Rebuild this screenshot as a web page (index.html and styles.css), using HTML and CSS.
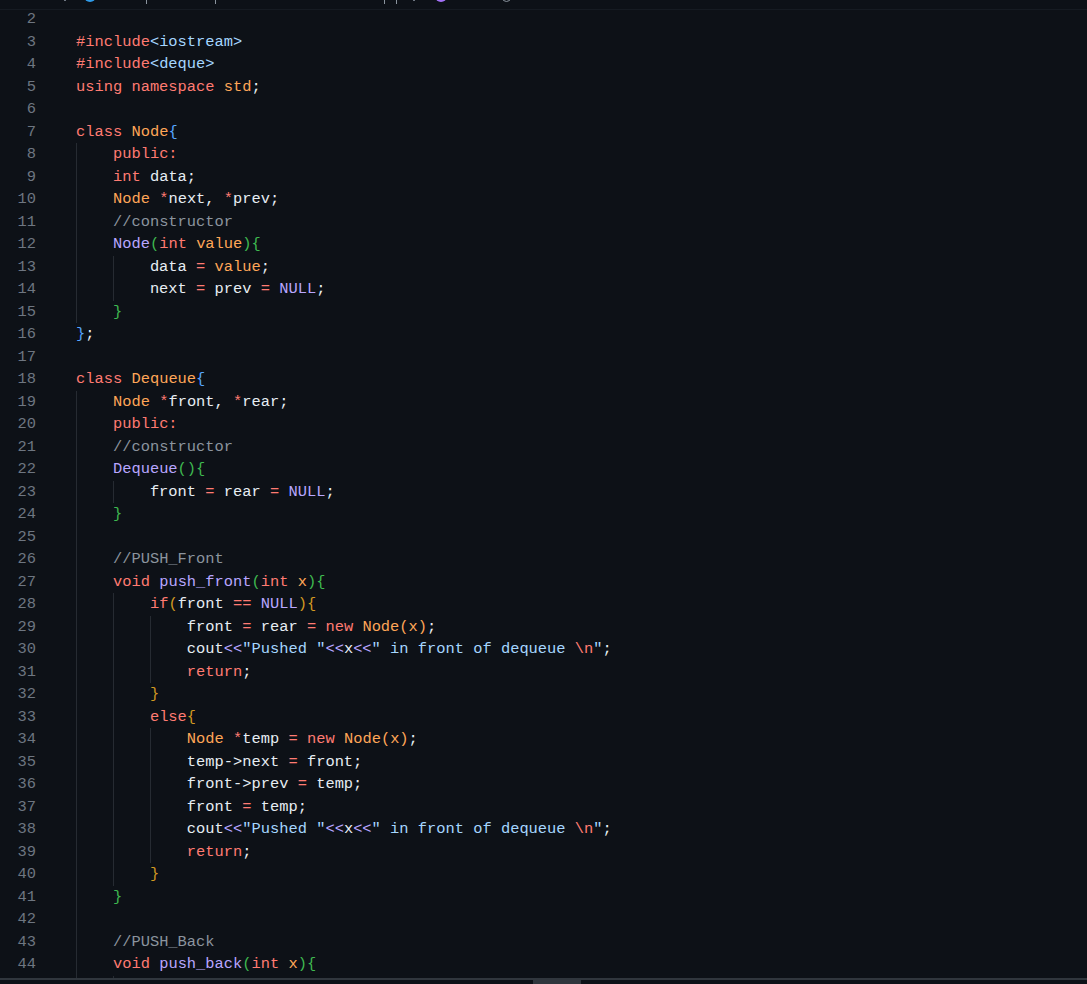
FILE: index.html
```html
<!DOCTYPE html>
<html lang="en">
<head>
    <meta charset="UTF-8">
    <title>deque.cpp</title>
    <link rel="stylesheet" href="styles.css">
</head>
<body>
    <div class="crumbs">
        <span class="crumb-dot dot-a"></span>
        <span class="crumb-mark mark-blue"></span>
        <span class="crumb-tick tick-a"></span>
        <span class="crumb-tick tick-b"></span>
        <span class="crumb-tick tick-c"></span>
        <span class="crumb-tick tick-d"></span>
        <span class="crumb-dot dot-b"></span>
        <span class="crumb-mark mark-purple"></span>
        <span class="crumb-ring"></span>
    </div>
    <div class="editor">
<div class="line"><span class="num">2</span><span class="code"></span></div>
<div class="line"><span class="num">3</span><span class="code"><span class="kw">#include</span><span class="str">&lt;iostream&gt;</span></span></div>
<div class="line"><span class="num">4</span><span class="code"><span class="kw">#include</span><span class="str">&lt;deque&gt;</span></span></div>
<div class="line"><span class="num">5</span><span class="code"><span class="kw">using namespace</span> <span class="ty">std</span>;</span></div>
<div class="line"><span class="num">6</span><span class="code"></span></div>
<div class="line"><span class="num">7</span><span class="code"><span class="kw">class</span> <span class="ty">Node</span><span class="b1">{</span></span></div>
<div class="line"><span class="num">8</span><span class="code"><i class="g1"></i>    <span class="kw">public:</span></span></div>
<div class="line"><span class="num">9</span><span class="code"><i class="g1"></i>    <span class="kw">int</span> data;</span></div>
<div class="line"><span class="num">10</span><span class="code"><i class="g1"></i>    <span class="ty">Node</span> <span class="kw">*</span>next, <span class="kw">*</span>prev;</span></div>
<div class="line"><span class="num">11</span><span class="code"><i class="g1"></i>    <span class="com">//constructor</span></span></div>
<div class="line"><span class="num">12</span><span class="code"><i class="g1"></i>    <span class="fn">Node</span><span class="b2">(</span><span class="kw">int</span> <span class="ty">value</span><span class="b2">){</span></span></div>
<div class="line"><span class="num">13</span><span class="code"><i class="g1"></i><i class="g2"></i>        data <span class="kw">=</span> <span class="ty">value</span>;</span></div>
<div class="line"><span class="num">14</span><span class="code"><i class="g1"></i><i class="g2"></i>        next <span class="kw">=</span> prev <span class="kw">=</span> <span class="fn">NULL</span>;</span></div>
<div class="line"><span class="num">15</span><span class="code"><i class="g1"></i>    <span class="b2">}</span></span></div>
<div class="line"><span class="num">16</span><span class="code"><span class="b1">}</span>;</span></div>
<div class="line"><span class="num">17</span><span class="code"></span></div>
<div class="line"><span class="num">18</span><span class="code"><span class="kw">class</span> <span class="ty">Dequeue</span><span class="b1">{</span></span></div>
<div class="line"><span class="num">19</span><span class="code"><i class="g1"></i>    <span class="ty">Node</span> <span class="kw">*</span>front, <span class="kw">*</span>rear;</span></div>
<div class="line"><span class="num">20</span><span class="code"><i class="g1"></i>    <span class="kw">public:</span></span></div>
<div class="line"><span class="num">21</span><span class="code"><i class="g1"></i>    <span class="com">//constructor</span></span></div>
<div class="line"><span class="num">22</span><span class="code"><i class="g1"></i>    <span class="fn">Dequeue</span><span class="b2">(){</span></span></div>
<div class="line"><span class="num">23</span><span class="code"><i class="g1"></i><i class="g2"></i>        front <span class="kw">=</span> rear <span class="kw">=</span> <span class="fn">NULL</span>;</span></div>
<div class="line"><span class="num">24</span><span class="code"><i class="g1"></i>    <span class="b2">}</span></span></div>
<div class="line"><span class="num">25</span><span class="code"><i class="g1"></i></span></div>
<div class="line"><span class="num">26</span><span class="code"><i class="g1"></i>    <span class="com">//PUSH_Front</span></span></div>
<div class="line"><span class="num">27</span><span class="code"><i class="g1"></i>    <span class="kw">void</span> <span class="fn">push_front</span><span class="b2">(</span><span class="kw">int</span> <span class="ty">x</span><span class="b2">){</span></span></div>
<div class="line"><span class="num">28</span><span class="code"><i class="g1"></i><i class="g2"></i>        <span class="kw">if</span><span class="b3">(</span>front <span class="kw">==</span> <span class="fn">NULL</span><span class="b3">){</span></span></div>
<div class="line"><span class="num">29</span><span class="code"><i class="g1"></i><i class="g2"></i><i class="g3"></i>            front <span class="kw">=</span> rear <span class="kw">=</span> <span class="kw">new</span> <span class="ty">Node(x)</span>;</span></div>
<div class="line"><span class="num">30</span><span class="code"><i class="g1"></i><i class="g2"></i><i class="g3"></i>            cout<span class="fn">&lt;&lt;</span><span class="str">"Pushed "</span><span class="fn">&lt;&lt;</span>x<span class="fn">&lt;&lt;</span><span class="str">" in front of dequeue </span><span class="kw">\n</span><span class="str">"</span>;</span></div>
<div class="line"><span class="num">31</span><span class="code"><i class="g1"></i><i class="g2"></i><i class="g3"></i>            <span class="kw">return</span>;</span></div>
<div class="line"><span class="num">32</span><span class="code"><i class="g1"></i><i class="g2"></i>        <span class="b3">}</span></span></div>
<div class="line"><span class="num">33</span><span class="code"><i class="g1"></i><i class="g2"></i>        <span class="kw">else</span><span class="b3">{</span></span></div>
<div class="line"><span class="num">34</span><span class="code"><i class="g1"></i><i class="g2"></i><i class="g3"></i>            <span class="ty">Node</span> <span class="kw">*</span>temp <span class="kw">=</span> <span class="kw">new</span> <span class="ty">Node(x)</span>;</span></div>
<div class="line"><span class="num">35</span><span class="code"><i class="g1"></i><i class="g2"></i><i class="g3"></i>            temp-&gt;next <span class="kw">=</span> front;</span></div>
<div class="line"><span class="num">36</span><span class="code"><i class="g1"></i><i class="g2"></i><i class="g3"></i>            front-&gt;prev <span class="kw">=</span> temp;</span></div>
<div class="line"><span class="num">37</span><span class="code"><i class="g1"></i><i class="g2"></i><i class="g3"></i>            front <span class="kw">=</span> temp;</span></div>
<div class="line"><span class="num">38</span><span class="code"><i class="g1"></i><i class="g2"></i><i class="g3"></i>            cout<span class="fn">&lt;&lt;</span><span class="str">"Pushed "</span><span class="fn">&lt;&lt;</span>x<span class="fn">&lt;&lt;</span><span class="str">" in front of dequeue </span><span class="kw">\n</span><span class="str">"</span>;</span></div>
<div class="line"><span class="num">39</span><span class="code"><i class="g1"></i><i class="g2"></i><i class="g3"></i>            <span class="kw">return</span>;</span></div>
<div class="line"><span class="num">40</span><span class="code"><i class="g1"></i><i class="g2"></i>        <span class="b3">}</span></span></div>
<div class="line"><span class="num">41</span><span class="code"><i class="g1"></i>    <span class="b2">}</span></span></div>
<div class="line"><span class="num">42</span><span class="code"><i class="g1"></i></span></div>
<div class="line"><span class="num">43</span><span class="code"><i class="g1"></i>    <span class="com">//PUSH_Back</span></span></div>
<div class="line"><span class="num">44</span><span class="code"><i class="g1"></i>    <span class="kw">void</span> <span class="fn">push_back</span><span class="b2">(</span><span class="kw">int</span> <span class="ty">x</span><span class="b2">){</span></span></div>
<div class="line"><span class="num"></span><span class="code"><i class="g1"></i><i class="g2"></i></span></div>
    </div>
    <div class="scrollbar"><div class="thumb"></div></div>
</body>
</html>
```

FILE: styles.css
```css
html, body {
    margin: 0;
    height: 100%;
    overflow: hidden;
}

body {
    background-color: #0d1117;
    display: flex;
    flex-direction: column;
    height: 984px;
    font-family: "Liberation Mono", monospace;
    font-size: 15.4px;
    color: #e6edf3;
}

/* breadcrumb row, cut off by the top of the shot */
.crumbs {
    height: 9px;
    flex: none;
    position: relative;
    overflow: hidden;
    border-bottom: 1px solid #161b22;
}

.crumb-mark {
    position: absolute;
    top: -10px;
    width: 12px;
    height: 12px;
    border-radius: 50%;
}

.mark-blue {
    left: 84px;
    background-color: #2f9be8;
}

.mark-purple {
    left: 435px;
    background-color: #a371f7;
}

.crumb-ring {
    position: absolute;
    left: 502px;
    top: -7px;
    width: 7px;
    height: 7px;
    border: 1px solid #8b949e;
    border-radius: 50%;
}

.crumb-dot {
    position: absolute;
    top: 0;
    width: 2px;
    height: 1px;
    background-color: #6e7681;
}

.dot-a { left: 64px; }
.dot-b { left: 413px; }

.crumb-tick {
    position: absolute;
    top: 0;
    width: 1px;
    height: 4px;
    background-color: #8b949e;
}

.tick-a { left: 146px; }
.tick-b { left: 215px; }
.tick-c { left: 384px; }
.tick-d { left: 396px; }

.editor {
    flex: 1;
    overflow: hidden;
    margin-top: -2px;
}

.line {
    display: flex;
    height: 22.51px;
    line-height: 22.51px;
    white-space: pre;
}

.num {
    width: 36px;
    text-align: right;
    color: #6e7681;
    flex: none;
}

.code {
    margin-left: 40px;
    position: relative;
}

/* indent guides */
.g1, .g2, .g3 {
    position: absolute;
    top: 0;
    bottom: 0;
    width: 1px;
    background-color: #262b32;
}

.g1 { left: 0; }
.g2 { left: 37px; }
.g3 { left: 74px; }

.kw { color: #ff7b72; }
.ty { color: #ffa657; }
.fn { color: #b8a6ff; }
.str { color: #a5d6ff; }
.com { color: #8b949e; }
.b1 { color: #58a6ff; }
.b2 { color: #3fb950; }
.b3 { color: #d29922; }

.scrollbar {
    flex: none;
    height: 4px;
    border-top: 2px solid #30363d;
    position: relative;
}

.thumb {
    width: 48px;
    height: 4px;
    margin-left: 533px;
    background-color: #30363d;
}
```
